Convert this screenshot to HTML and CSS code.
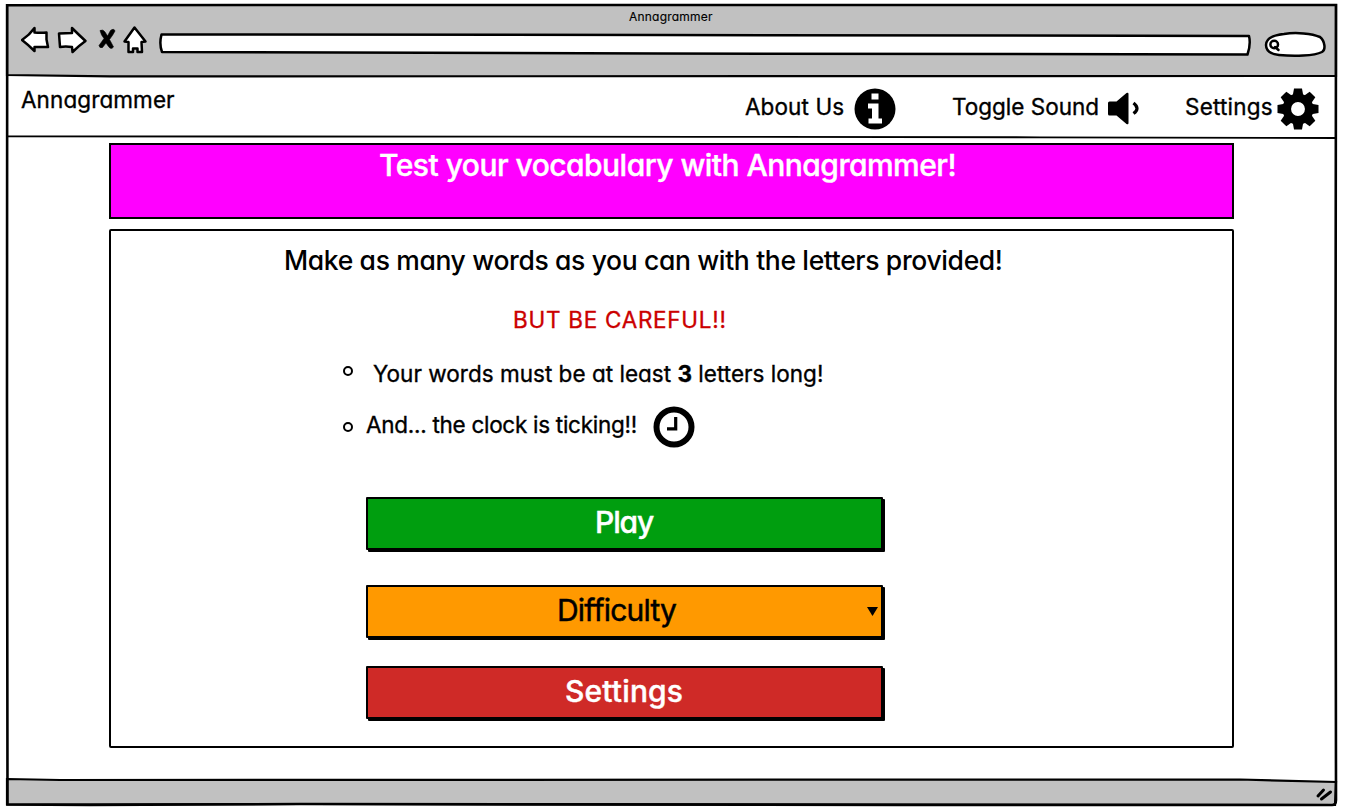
FILE: index.html
```html
<!DOCTYPE html>
<html lang="en">
<head>
<meta charset="utf-8">
<title>Annagrammer</title>
<link rel="stylesheet" href="styles.css">
</head>
<body>
<div class="window">
  <svg class="frame" viewBox="0 0 1347 812" aria-hidden="true">
    <path class="bar" d="M7 5H1336L1336 76L110 76.4L7 75Z"/>
    <path class="bar" d="M7 779L60 780L1240 779.5L1336 782L1335 805L300 804L7 804.5Z"/>
    <path class="thin" d="M7 136.3L700 136.8L1040 137.3L1336 138"/>
    <path class="edge" d="M7.200 5.200L300 5L1336 5L1335.500 400L1336 800Q1336 805 1332 805L900 805L300 804L90 805L7.500 804.500L7 400Z"/>
    <path class="grip" d="M1318 796L1323.500 790M1321.500 799L1330.500 792"/>
  </svg>

  <header class="chrome">
    <div class="title"><span class="t-title">Annagrammer</span></div>
    <div class="tools">
      <svg class="tools-icons" viewBox="0 0 138 40" aria-hidden="true">
        <path class="ink" d="M1 20Q8.500 15 13.500 8V12.500Q19.500 13 25.500 12.500V19.500L27 27L13.500 27V31Q7.500 25 1 20Z"/>
        <path class="ink" d="M38 13.500L51 13V8Q57.500 14.500 64.500 21Q57.500 26 51.500 32L51 27Q44.500 26 39 27Z"/>
        <path class="cross" d="M79 10.500Q82 9 84 12L86.500 16L89.500 10.500Q93 8 94 11Q92 15 88.500 19.500Q91 24 92.500 27Q90 30 87.500 26.500L85 23L81.500 27.500Q78.500 28.500 78 25.500Q80.500 22 83 18.500Q80 15 79 10.500Z"/>
        <path class="ink" d="M113.500 7.500Q119 14.500 124.500 21.500L120.500 22L121 32L116.500 32V28.500H112V32H107.500V22L103.500 21.500Q108.500 14.500 113.500 7.500Z"/>
      </svg>
      <svg class="address" viewBox="0 0 1094 28" aria-hidden="true">
        <path class="ink" d="M3.500 4.500L500 5L1091 6Q1093 14 1089.500 24.500L500 23.500L4 22Q1 14 3.500 4.500Z"/>
      </svg>
      <svg class="search" viewBox="0 0 62 28" aria-hidden="true">
        <path class="ink" d="M2 15C2 8 10 5 20 4C32 2 48 3.500 56 7C61 11 62 20 58 22C50 26 30 26.500 15 25C6 24 2 20 2 15Z"/>
        <ellipse class="ink" cx="10.200" cy="14.500" rx="3.800" ry="3.700"/>
        <path class="ink" d="M11 17L14.500 20"/>
      </svg>
    </div>
  </header>

  <nav class="nav">
    <a class="brand"><span class="t-brand">Annagrammer</span></a>
    <a class="link about"><span class="t-about">About Us</span>
      <svg class="icon" viewBox="0 0 42 42" aria-hidden="true"><circle cx="21" cy="21" r="20.500"/><path fill="#fff" d="M17.500 5.500h7v6h-7zM14 15.500h10.500v15h3.500v5H14.500v-5H18v-10h-4z"/></svg>
    </a>
    <a class="link sound"><span class="t-sound">Toggle Sound</span>
      <svg class="speaker" viewBox="0 0 34 36" aria-hidden="true"><path d="M1 12Q1 10.500 2.500 10.500H9.500L19.500 2Q21.500 1 21.500 3V32Q21.500 34 19.500 33L9.500 24.500H2.500Q1 24.500 1 23Z"/><path fill="none" stroke="#000" stroke-width="3.200" d="M26.500 12Q33.500 17.500 26.500 22.500"/></svg>
    </a>
    <a class="link prefs"><span class="t-prefs">Settings</span>
      <svg class="icon" viewBox="-21 -21 42 42" aria-hidden="true">
        <path id="tooth" d="M-4 -20.500H4L5.500 -12H-5.500Z"/>
        <use href="#tooth" transform="rotate(45)"/><use href="#tooth" transform="rotate(90)"/><use href="#tooth" transform="rotate(135)"/><use href="#tooth" transform="rotate(180)"/><use href="#tooth" transform="rotate(225)"/><use href="#tooth" transform="rotate(270)"/><use href="#tooth" transform="rotate(315)"/>
        <circle r="11.200" fill="none" stroke="#000" stroke-width="8.500"/>
      </svg>
    </a>
  </nav>

  <main class="page">
    <h1 class="banner"><span class="t-banner">Test your vocabulary with Annagrammer!</span></h1>
    <section class="card">
      <h2 class="lead"><span class="t-lead">Make as many words as you can with the letters provided!</span></h2>
      <p class="warn"><span class="t-warn">BUT BE CAREFUL!!</span></p>
      <ul class="rules">
        <li class="rule first"><i class="dot"></i><span class="t-rule1">Your words must be at least <b>3</b> letters long!</span></li>
        <li class="rule second"><i class="dot"></i><span class="t-rule2">And... the clock is ticking!!</span>
          <svg class="icon clock" viewBox="0 0 42 42" aria-hidden="true"><circle cx="21" cy="21" r="17.500" fill="#fff" stroke="#000" stroke-width="6"/><path fill="none" stroke="#000" stroke-width="3.200" d="M22.700 11V22.800H14"/></svg>
        </li>
      </ul>
      <div class="actions">
        <button class="btn play"><span class="t-play">Play</span></button>
        <button class="btn difficulty"><span class="t-diff">Difficulty</span><svg class="caret" viewBox="0 0 11 9" aria-hidden="true"><path d="M0 0H11L5.500 9Z"/></svg></button>
        <button class="btn settings"><span class="t-set">Settings</span></button>
      </div>
    </section>
  </main>
</div>
</body>
</html>
```
FILE: styles.css
```css
* { box-sizing: border-box; margin: 0; padding: 0; }
body {
  width: 1347px; height: 812px; overflow: hidden;
  background: #fff; color: #000;
  font: 400 22.5px/30px Inter, Lato, sans-serif;
  font-feature-settings: "cv11" 1;
}
svg { display: block; flex: none; }
span { white-space: nowrap; -webkit-text-stroke: 0.35px currentColor; }

.window { position: relative; height: 812px; }
.frame { position: absolute; inset: 0; width: 1347px; height: 812px; z-index: -1; }
.bar { fill: #c1c1c1; stroke: #000; stroke-width: 2.2; }
.thin { fill: none; stroke: #000; stroke-width: 1.8; }
.edge { fill: none; stroke: #000; stroke-width: 2.6; }
.grip { fill: none; stroke: #000; stroke-width: 3; stroke-linecap: round; }
.ink { fill: #fff; stroke: #000; stroke-width: 2.5; stroke-linejoin: round; stroke-linecap: round; }
.cross { fill: #000; stroke: #000; stroke-width: 0.6; }

.chrome { height: 76px; padding-top: 7px; }
.title { height: 13px; padding-left: 629px; font-size: 12px; line-height: 20px; letter-spacing: 0.22px; }
.title span { -webkit-text-stroke: 0.15px currentColor; }
.tools { display: flex; padding-left: 21px; }
.tools-icons { width: 138px; height: 40px; }
.address { width: 1094px; height: 28px; margin: 10px 11px 0 -1px; }
.search { width: 62px; height: 28px; margin: 10px 0 0 1px; }

.nav { display: flex; height: 61px; padding-left: 21px; letter-spacing: 0.1px; }
.brand { width: 724px; padding-top: 9px; }
.link { display: flex; align-items: flex-start; }
.link span { padding-top: 16px; }
.icon { width: 42px; height: 42px; }
.link .icon { margin-top: 12px; }
.about { width: 207px; justify-content: space-between; padding-right: 56px; }
.sound { width: 233px; justify-content: space-between; padding-right: 44px; letter-spacing: 0; }
.speaker { width: 34px; height: 36px; margin-top: 15px; }
.prefs { width: 134px; justify-content: space-between; letter-spacing: 0.2px; }

.page { padding: 6px 113px 0 109px; }
.banner {
  height: 76px; border: 2.5px solid #000; background: #f0f;
  padding: 2px 0 0 268px;
  color: #fff; font-size: 30px; font-weight: 500; line-height: 36px; letter-spacing: -0.52px;
}
.banner span, .play span, .settings span { -webkit-text-stroke: 0.4px currentColor; }
.card { height: 519px; margin-top: 10px; border: 2px solid #000; border-radius: 2px; padding: 12px 0 0 173px; }
.lead { font-size: 26.5px; font-weight: 500; line-height: 34px; letter-spacing: -0.36px; }
.lead span { -webkit-text-stroke: 0; }
.warn { padding: 27px 0 0 229px; color: #cb0000; line-height: 32px; letter-spacing: 0.72px; }
.rules { list-style: none; padding: 21px 0 0 59px; }
.rule { display: flex; line-height: 34px; }
.dot { width: 10px; height: 10px; border: 2px solid #000; border-radius: 50%; flex: none; }
.first { height: 51px; letter-spacing: 0.02px; }
.first .dot { margin: 9px 20px 0 0; }
.second { width: 352px; height: 44px; letter-spacing: -0.28px; }
.second .dot { margin: 14px 13px 0 0; }
.clock { margin: -2px 0 0 auto; }

.actions { width: 519px; margin-left: 82px; padding-top: 45px; }
.btn {
  display: flex; align-items: flex-start; width: 517px; height: 53px;
  border: 2.5px solid #000; border-radius: 1px; box-shadow: 2px 2px 0 #000;
  font: inherit; font-size: 30px; line-height: 36px; padding-top: 5px; color: #fff;
  font-weight: 500;
}
.play { background: #009e0f; padding-left: 227px; letter-spacing: -1.1px; }
.difficulty { background: #f90; color: #000; font-weight: 400; margin-top: 35px; padding-left: 189px; letter-spacing: -0.8px; }
.difficulty span { -webkit-text-stroke: 0.5px currentColor; }
.settings { background: #cf2a27; margin-top: 28px; padding-left: 197px; letter-spacing: 0.15px; }
.caret { width: 11px; height: 9px; margin: 15px 3px 0 auto; }
```
